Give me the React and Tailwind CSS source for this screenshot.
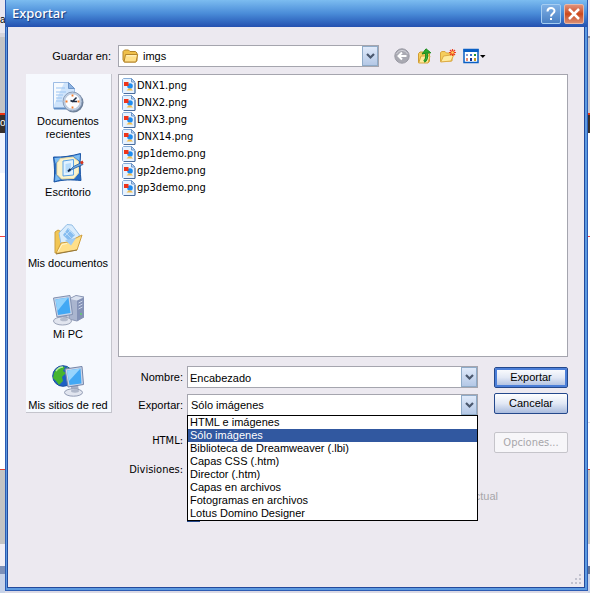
import React, { useState } from "react";

const files = [
  "DNX1.png",
  "DNX2.png",
  "DNX3.png",
  "DNX14.png",
  "gp1demo.png",
  "gp2demo.png",
  "gp3demo.png",
];

const exportTypes = [
  "HTML e imágenes",
  "Sólo imágenes",
  "Biblioteca de Dreamweaver (.lbi)",
  "Capas CSS (.htm)",
  "Director (.htm)",
  "Capas en archivos",
  "Fotogramas en archivos",
  "Lotus Domino Designer",
];

const FolderIcon = () => (
  <svg width="17" height="14" viewBox="0 0 17 14" aria-hidden="true">
    <path d="M1 11V2.500L2.500 1h4L8 2.500h5.500L15 4v7.500L13.500 13H2.500z" fill="#f0c04a" stroke="#b5852a" />
    <path d="M3.500 5.500h12.200L14 13H2z" fill="#ffe08a" stroke="#b5852a" strokeLinejoin="round" />
    <path d="M4.500 6.800h9.500" stroke="#fff6cc" />
  </svg>
);

const ImageFileIcon = () => (
  <svg width="14" height="16" viewBox="0 0 14 16" aria-hidden="true">
    <path d="M.5 1.500l1-1h8l3.500 4v10l-.5 1h-11l-1-1z" fill="#e6f2ff" stroke="#86acd8" />
    <path d="M2 15.500h11V5" fill="none" stroke="#4a6c9c" />
    <path d="M9.500.5v3.500h3.500z" fill="#c2dbf6" stroke="#6f96c8" />
    <circle cx="8" cy="8" r="2.800" fill="#1e8cf0" />
    <path d="M2 4h4.500v4H2z" fill="#ee341a" />
    <path d="M4.500 12.500l2-2h2.500l2 2z" fill="#f6bd48" />
  </svg>
);

const BackIcon = () => (
  <svg width="16" height="16" viewBox="0 0 16 16" aria-hidden="true">
    <circle cx="8" cy="8" r="7.200" fill="#a9a9b2" stroke="#9a9aa4" />
    <path d="M2.500 6a6 6 0 0 1 11 0" fill="none" stroke="#d0d0d8" />
    <path d="M12.500 8H5M8 4.500L4.500 8 8 11.500" fill="none" stroke="#fff" strokeWidth="2" />
  </svg>
);

const UpIcon = () => (
  <svg width="16" height="16" viewBox="0 0 16 16" aria-hidden="true">
    <path d="M1.500 14.500V5.500L3 4h3L7 5.500h5.500v7.500l-1 1.500z" fill="#f6ce5c" stroke="#d09c34" />
    <path d="M4 8h9l-2 7H1.700z" fill="#ffeb9c" stroke="#d9a63a" />
    <path d="M7 13.500c3-1.500 3-4 2.500-8" fill="none" stroke="#1c8a1e" strokeWidth="3" />
    <path d="M7.300 13c2.700-1.500 2.700-4 2.300-8" fill="none" stroke="#46ba40" />
    <path d="M5 6L9 .8 13.800 4.800l-4 .2z" fill="#2faa2c" stroke="#1c8a1e" />
  </svg>
);

const NewFolderIcon = () => (
  <svg width="16" height="16" viewBox="0 0 16 16" aria-hidden="true">
    <path d="M.5 13.500V4.500L2 3.500h3L6.500 5h5.500v8z" fill="#f6ce5c" stroke="#d8a640" />
    <path d="M3.500 8L14 6.500 11 13 .7 14z" fill="#ffeb9c" stroke="#dcaa44" />
    <path d="M12.500 1v7M9 4.500h7M10 2l5 5M15 2l-5 5" stroke="#ee3e1e" strokeWidth="1.200" />
    <circle cx="12.500" cy="4.500" r="1.300" fill="#ffd95e" />
  </svg>
);

const ViewIcon = () => (
  <svg width="24" height="16" viewBox="0 0 24 16" aria-hidden="true">
    <path d="M1 1.500h14v13H1z" fill="#fff" stroke="#0a5fc4" strokeWidth="1.500" />
    <path d="M.5 1h15v3H.5z" fill="#0a5fc4" />
    <path d="M3 6h2v2H3z" fill="#8d9ad2" />
    <path d="M7 6h2v2H7z" fill="#3b73d6" />
    <path d="M11 6h2v2h-2z" fill="#1f9430" />
    <path d="M3 10h2v3H3z" fill="#e58a72" />
    <path d="M7 10h2v3H7z" fill="#14308e" />
    <path d="M11 10h2v3h-2z" fill="#c79a20" />
    <path d="M17 7h5.500L19.800 10z" fill="#000" />
  </svg>
);

const RecentIcon = () => (
  <svg width="32" height="32" viewBox="0 0 32 32" aria-hidden="true">
    <path d="M1.500 1.500h15l6 6v20h-21z" fill="#cfe4fb" stroke="#9dbce4" />
    <path d="M2 2h10L2 24z" fill="#fff" opacity=".8" />
    <path d="M16.500 1.500v6h6z" fill="#8fb4e2" stroke="#6c94c8" />
    <path d="M4 7h9M4 11h10M4 14h7M4 17h6M4 20h6" stroke="#9cc5f2" />
    <path d="M2 27.500h12" stroke="#5f8cc4" strokeWidth="2" />
    <circle cx="21.500" cy="21.500" r="10" fill="#6c7f98" />
    <circle cx="20.500" cy="20.500" r="9.500" fill="#c4d4e8" stroke="#8a9db8" />
    <circle cx="20.500" cy="20.500" r="7.800" fill="#fafcff" stroke="#b4c2d6" />
    <path d="M20.500 13.500v2M20.500 25.500v2M13.500 20.500h2M25.500 20.500h2" stroke="#f07a2c" strokeWidth="1.800" />
    <path d="M24.500 16.500L20.500 20.500l-2-1M20.500 20.500h4.500" fill="none" stroke="#1d2c42" strokeWidth="1.500" />
  </svg>
);

const DesktopIcon = () => (
  <svg width="32" height="32" viewBox="0 0 32 32" aria-hidden="true">
    <path d="M1.500 5c9 .5 18-1 27-3.500-.5 9.500-.5 19 .5 27-9-1-18-1-27 1.500C3 22 2.500 14 1.500 5z" fill="#2a6fc6" stroke="#1b56a6" />
    <path d="M2.500 6l7-.5-6 6zM28 2.500l-7 1.500 6.500 5zM3 29l.5-7 5 5.500z" fill="#7cbcf2" />
    <path d="M8.500 6.500L21 5l5.500 4.500V21L22 26.500 9.500 27 5 22.500V11z" fill="#fbf3cc" stroke="#e8dba4" />
    <path d="M11 9l10.500-1.500v15.500l-10.500 1z" fill="#e2f2ff" stroke="#5aa2e6" />
    <path d="M13.500 12l5.500-1v9l-5.500 1z" fill="#b5dbfb" />
    <path d="M17 19l4.500-4.500 8-4 1.500 2-9 4z" fill="#6aa8e4" stroke="#285a9c" strokeWidth=".8" />
    <path d="M16 19.500l2.500-2.500" stroke="#10284d" strokeWidth="1.800" />
    <path d="M28 10l2.500-1.500 1.200 2.500-2.200 1.500z" fill="#d7381f" />
  </svg>
);

const DocumentsIcon = () => (
  <svg width="32" height="32" viewBox="0 0 32 32" aria-hidden="true">
    <path d="M3 30V9l3-2 6 3 1 3 8 4v8z" fill="#f2c654" stroke="#caa044" />
    <path d="M7 10L15 1.500l5 .5L27.500 12 20 25 9 21z" fill="#d9ecfc" stroke="#94bfe6" />
    <path d="M16 5l7 7-6 6-6-6z" fill="#86bdf0" />
    <path d="M13 9l6 6M16 6l6 6M19 7l-6 6" stroke="#b8daf8" />
    <path d="M4 30.500L9 20l7-1 6-3 8-4-5 15z" fill="#ffe08a" stroke="#cf9f3e" strokeLinejoin="round" />
    <path d="M13 17l11-2-5 7.500z" fill="#9fcbf3" />
    <path d="M6 28.500l4-7 5-1" fill="none" stroke="#fff6cf" />
    <path d="M4 31l21-4" stroke="#94783c" />
  </svg>
);

const ComputerIcon = () => (
  <svg width="32" height="32" viewBox="0 0 32 32" aria-hidden="true">
    <path d="M17 5l7-3.500 8 1.500v20l-7 4-8-2z" fill="#aab5cf" stroke="#8a96b4" />
    <path d="M25 6.500l7-3v19.500l-7 4z" fill="#8492b6" />
    <path d="M18 5l6-3 7 1.500-6 3z" fill="#dbe2ef" />
    <path d="M26.500 9l4-2M26.500 12l4-2M26.500 15l4-2" stroke="#c9d3e7" />
    <circle cx="29" cy="20" r="1" fill="#62d06a" />
    <path d="M8 21h7l2 5H8z" fill="#aab1c6" />
    <ellipse cx="10.500" cy="27" rx="9" ry="4" fill="#e1e5ef" stroke="#9aa3b8" />
    <ellipse cx="12" cy="25.500" rx="4" ry="1.800" fill="#b3bacb" />
    <path d="M1.500 4L18 1.500l2.500 19L5 23z" fill="#cbd5e8" stroke="#8190b0" />
    <path d="M3.500 5.500l13-2 2 15.500-12.500 2z" fill="#42a8f4" />
    <path d="M3.500 5.500l13-2L5.500 17z" fill="#8fd1fc" />
  </svg>
);

const NetworkIcon = () => (
  <svg width="32" height="32" viewBox="0 0 32 32" aria-hidden="true">
    <circle cx="11" cy="11" r="10.300" fill="#1d5fc4" stroke="#1b4c9e" />
    <path d="M2 8c2-4 6-7 11-6l-2 4 3 2-4 4 1 4-4 4-3-4-3-3z" fill="#46b52f" />
    <path d="M15 2l4 3-3 3-2-3z" fill="#6ccf48" />
    <path d="M4 6c2-3 4-4 7-4" fill="none" stroke="#b6ee9d" strokeWidth="1.500" />
    <path d="M19 20h7l1 6h-8z" fill="#a7afc4" />
    <ellipse cx="21.500" cy="27.500" rx="9" ry="3.700" fill="#e1e5ef" stroke="#929cb4" />
    <ellipse cx="23" cy="26" rx="4" ry="1.700" fill="#b0b8ca" />
    <path d="M13 4l17-2.500 1.500 18L16 22z" fill="#cbd5e8" stroke="#7484a8" />
    <path d="M15 5.500l13.500-2 1 15L17.500 20z" fill="#42a8f4" />
    <path d="M15 5.500l13.500-2L17 16z" fill="#97d5fd" />
  </svg>
);

const places = [
  { label: "Documentos recientes", icon: <RecentIcon /> },
  { label: "Escritorio", icon: <DesktopIcon /> },
  { label: "Mis documentos", icon: <DocumentsIcon /> },
  { label: "Mi PC", icon: <ComputerIcon /> },
  { label: "Mis sitios de red", icon: <NetworkIcon /> },
];

const tools = [
  { label: "Atrás", icon: <BackIcon /> },
  { label: "Subir un nivel", icon: <UpIcon /> },
  { label: "Crear nueva carpeta", icon: <NewFolderIcon /> },
  { label: "Ver", icon: <ViewIcon /> },
];

// Blue arrow box at the right end of a combo
const ComboArrow = () => (
  <span className="pointer-events-none absolute inset-y-px right-px flex w-4 items-center justify-center border border-[#8fabc8] bg-linear-to-b from-[#e0eafa] to-[#b4c8e6]">
    <svg width="9" height="7" viewBox="0 0 9 7" aria-hidden="true">
      <path d="M1 1l3.500 3.500L8 1" fill="none" stroke="#4a586e" strokeWidth="2.200" />
    </svg>
  </span>
);

const comboClass =
  "block h-[22px] w-full appearance-none border border-[#a5a5ae] bg-white pr-5 outline-none";

const buttonClass =
  "h-[21px] rounded-xs border border-[#24488c] bg-linear-to-b from-white via-[#e2e8f5] via-50% to-[#a9bbdd] text-center";

const BackdropLeft = () => (
  <div className="flex w-[5px] shrink-0 flex-col overflow-hidden bg-white text-[10px] leading-4">
    <div className="h-[33px] bg-[#e8e6f0] pt-3">a</div>
    <div className="h-1 bg-[#d6d4dc]" />
    <div className="h-[76px] bg-[#c4c4c6]" />
    <div className="h-0.5 bg-[#ee3311]" />
    <div className="h-[18px] bg-[#38302c] text-white">o</div>
    <div className="h-10 bg-[#eff4fe]" />
    <div className="h-[63px]" />
    <div className="h-px bg-[#f04040]" />
    <div className="h-[232px]" />
    <div className="h-px bg-[#e04030]" />
    <div className="h-[74px] bg-[#c4c4c4]" />
    <div className="h-[22px] bg-[#efedf5]" />
    <div className="h-2 bg-[#7c90b8]" />
    <div className="flex-1 bg-[#c6d2e8]" />
  </div>
);

const BackdropRight = () => (
  <div className="flex w-0.5 shrink-0 flex-col bg-white">
    <div className="h-[36px] bg-[#edeaf4]" />
    <div className="h-0.5 bg-[#8e8e94]" />
    <div className="h-[75px] bg-[#c9c8ce]" />
    <div className="h-0.5 bg-[#ee3311]" />
    <div className="h-[18px] bg-[#38302c]" />
    <div className="h-[103px]" />
    <div className="h-px bg-[#f04040]" />
    <div className="h-[185px]" />
    <div className="h-px bg-[#dcdce4]" />
    <div className="h-[46px]" />
    <div className="h-px bg-[#e04030]" />
    <div className="h-[74px] bg-[#c4c4c4]" />
    <div className="h-[22px] bg-[#efedf5]" />
    <div className="h-2 bg-[#5f7296]" />
    <div className="flex-1 bg-[#c6d2e8]" />
  </div>
);

const App = () => {
  const [name, setName] = useState("Encabezado");
  const [type, setType] = useState("Sólo imágenes");

  return (
    <div className="flex min-h-screen bg-[#dcdae6] font-['Liberation_Sans',Arial,sans-serif] text-[11px] leading-[13px] text-black">
      <BackdropLeft />

      <div className="mb-0.5 flex min-w-0 flex-1 flex-col border-x border-b border-[#2c5cb4] bg-[#5c9ae0]">
        {/* Title bar */}
        <header className="flex h-[27px] items-center justify-between bg-linear-to-b from-[#7cbcf0] via-[#4a8cd8] via-50% to-[#2450b0] pr-[3px] pl-1.5">
          <h1 className="font-['Noto_Sans',sans-serif] text-[13px] font-medium text-white text-shadow-[1px_1px_1px_#143478]">
            Exportar
          </h1>
          <div className="flex gap-[3px]">
            <button
              type="button"
              aria-label="Ayuda"
              className="flex h-5 w-5 items-center justify-center rounded-xs border border-[#a5cdf2] bg-linear-to-b from-[#7fb0e4] to-[#4a80c4]"
            >
              <svg width="12" height="14" viewBox="0 0 12 14" aria-hidden="true">
                <path d="M2.500 4.500C2.500 0 9.500 0 9.500 4c0 2.500-3.500 2.500-3.500 5.500" fill="none" stroke="#fff" strokeWidth="2" />
                <path d="M5 11h2v2H5z" fill="#fff" />
              </svg>
            </button>
            <button
              type="button"
              aria-label="Cerrar"
              className="flex h-5 w-5 items-center justify-center rounded-xs border border-[#e8b8a8] bg-linear-to-b from-[#e09078] via-[#cc4818] to-[#d88c70]"
            >
              <svg width="12" height="12" viewBox="0 0 12 12" aria-hidden="true">
                <path d="M1 1l10 10M11 1L1 11" stroke="#fff" strokeWidth="2.500" />
              </svg>
            </button>
          </div>
        </header>

        <main className="mr-0.5 mb-0.5 ml-px flex flex-1 flex-col border-x border-b border-[#234a9c] bg-[#ece9f0] pr-4 pl-[18px]">
          {/* Folder row */}
          <div className="mt-[18px] flex items-center">
            <label htmlFor="folder" className="mr-[7px] w-[85px] text-right">
              Guardar en:
            </label>
            <div className="relative w-[261px]">
              <select id="folder" className={`${comboClass} pl-6`}>
                <option>imgs</option>
              </select>
              <span className="pointer-events-none absolute top-1 left-1">
                <FolderIcon />
              </span>
              <ComboArrow />
            </div>
            <div className="ml-[15px] flex gap-[7px]">
              {tools.map((tool) => (
                <button key={tool.label} type="button" aria-label={tool.label}>
                  {tool.icon}
                </button>
              ))}
            </div>
          </div>

          <div className="mt-[7px] flex items-start gap-1.5">
            {/* Places */}
            <nav className="flex w-[86px] shrink-0 flex-col border-r border-b border-[#c4c4cc] bg-[#f6f9fe] pt-[7px] pr-px">
              {places.map((place) => (
                <button
                  key={place.label}
                  type="button"
                  className="flex flex-col items-center gap-0.5 not-last:h-[71px]"
                >
                  {place.icon}
                  <span>{place.label}</span>
                </button>
              ))}
            </nav>

            <div className="min-w-0 flex-1">
              {/* File list */}
              <ul className="h-[283px] overflow-hidden border border-[#a5a5ae] bg-white px-[3px] pt-0.5 font-['DejaVu_Sans_Condensed','DejaVu_Sans',sans-serif]">
                {files.map((file) => (
                  <li key={file} className="flex h-[17px] items-center gap-px">
                    <ImageFileIcon />
                    <span>{file}</span>
                  </li>
                ))}
              </ul>

              {/* Export settings */}
              <form
                className="mt-[9px] flex gap-4"
                onSubmit={(e) => e.preventDefault()}
              >
                <div className="grid flex-1 grid-cols-[65px_1fr] content-start items-center gap-x-1">
                  <label htmlFor="name" className="text-right">
                    Nombre:
                  </label>
                  <div className="relative">
                    <input
                      id="name"
                      type="text"
                      value={name}
                      onChange={(e) => setName(e.target.value)}
                      className={`${comboClass} pt-px pl-0.5`}
                    />
                    <ComboArrow />
                  </div>

                  <label htmlFor="type" className="mt-1.5 text-right">
                    Exportar:
                  </label>
                  <div className="relative mt-1.5">
                    <select
                      id="type"
                      value={type}
                      onChange={(e) => setType(e.target.value)}
                      className={`${comboClass} pl-[3px]`}
                    >
                      {exportTypes.map((item) => (
                        <option key={item}>{item}</option>
                      ))}
                    </select>
                    <ComboArrow />
                    {/* Open list */}
                    <ul
                      role="listbox"
                      aria-label="Exportar"
                      className="absolute top-[21px] z-10 w-full border border-black bg-white"
                    >
                      {exportTypes.map((item) => (
                        <li
                          key={item}
                          role="option"
                          aria-selected={item === type}
                          onClick={() => setType(item)}
                          className="pl-0.5 aria-selected:bg-[#3158a0] aria-selected:text-white"
                        >
                          {item}
                        </li>
                      ))}
                    </ul>
                  </div>

                  <span className="mt-[18px] text-right font-['DejaVu_Sans_Condensed',sans-serif]">
                    HTML:
                  </span>
                  <span />
                  <span className="mt-4 text-right font-['DejaVu_Sans_Condensed',sans-serif]">
                    Divisiones:
                  </span>
                  <span />
                  <label className="col-start-2 mt-3.5 -mr-5 flex items-center justify-end gap-1 text-[#a7a6aa]">
                    <input type="checkbox" disabled className="size-[13px]" />
                    Sólo página actual
                  </label>
                  <input
                    type="checkbox"
                    aria-label="Incluir áreas sin divisiones"
                    className="col-start-2 mt-1.5 size-[13px] appearance-none border border-[#24488c] bg-white"
                  />
                </div>

                <div className="mt-px flex w-[74px] flex-col gap-[5px]">
                  <button
                    type="submit"
                    className={`${buttonClass} inset-ring-2 inset-ring-[#4c7fd8]`}
                  >
                    Exportar
                  </button>
                  <button type="button" className={buttonClass}>
                    Cancelar
                  </button>
                  <button
                    type="button"
                    disabled
                    className="mt-[13px] h-[21px] rounded-xs border border-[#c5c4ca] bg-[#f7f6f9] font-['DejaVu_Sans_Condensed',sans-serif] text-[#a7a6aa]"
                  >
                    Opciones...
                  </button>
                </div>
              </form>
            </div>
          </div>

          {/* Resize grip */}
          <div className="mt-auto -mr-3.5 self-end pb-0.5">
            <svg width="11" height="11" viewBox="0 0 11 11" aria-hidden="true">
              <path d="M8 0h2v2H8zM4 4h2v2H4zM8 4h2v2H8zM0 8h2v2H0zM4 8h2v2H4zM8 8h2v2H8z" fill="#c3c3cf" />
            </svg>
          </div>
        </main>
      </div>

      <BackdropRight />
    </div>
  );
};

export default App;
